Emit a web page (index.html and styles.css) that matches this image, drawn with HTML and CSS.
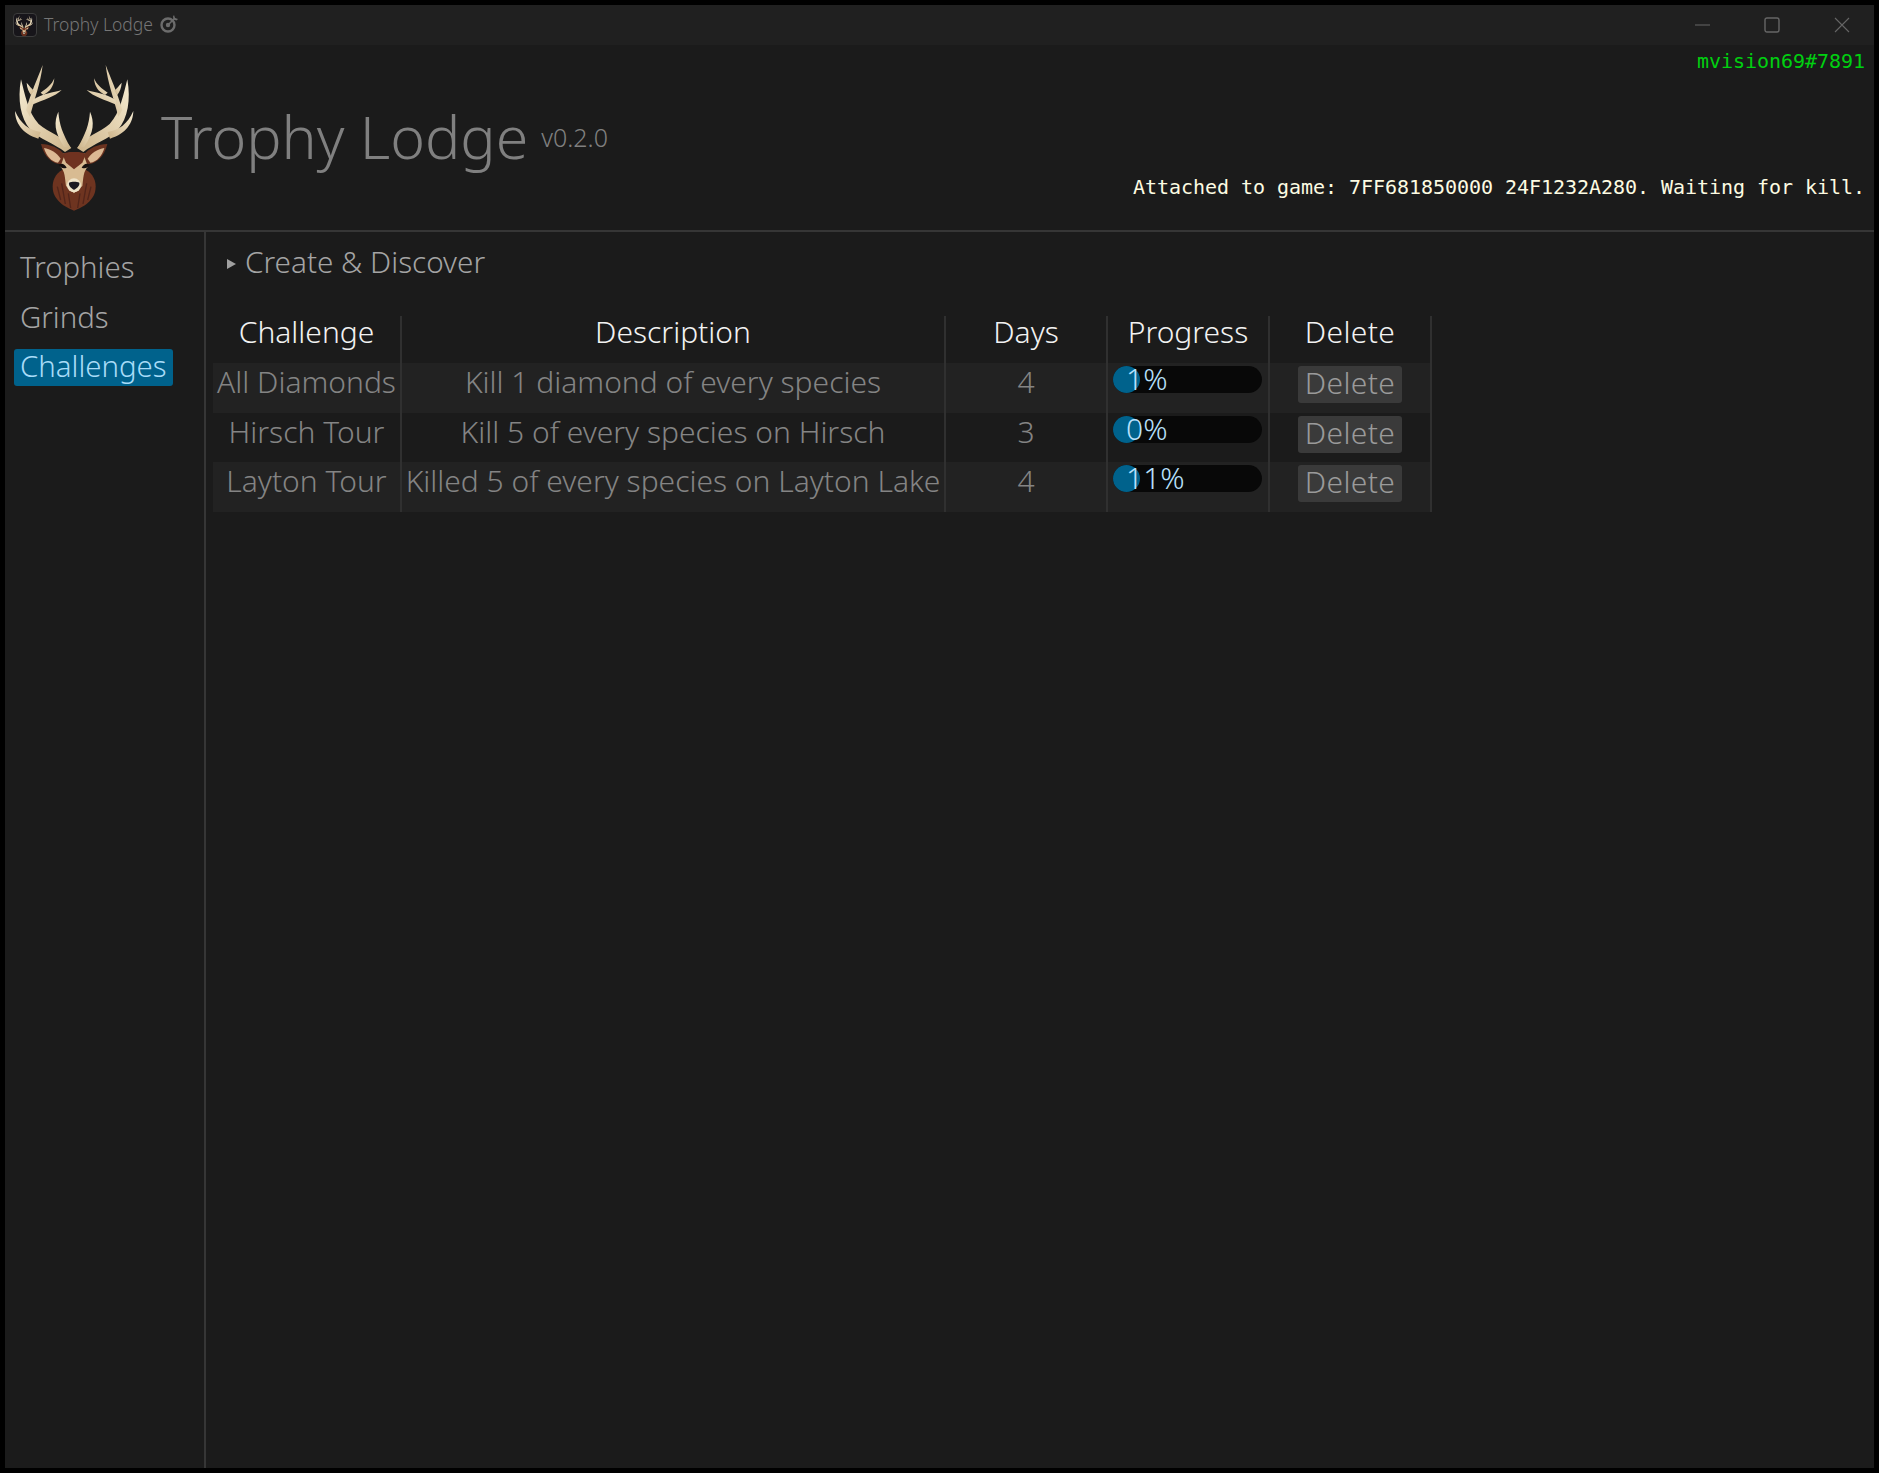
FILE: index.html
```html
<!DOCTYPE html>
<html lang="en">
<head>
    <meta charset="UTF-8">
    <title>Trophy Lodge</title>
    <link rel="stylesheet" href="styles.css">
</head>
<body>
    <svg class="defs" width="0" height="0">
        <defs>
            <linearGradient id="antler" x1="0" y1="0" x2="1" y2="1">
                <stop offset="0" stop-color="#f6ecd2"/>
                <stop offset="1" stop-color="#cdb48a"/>
            </linearGradient>
            <g id="antler-left" fill="url(#antler)">
                <path d="M195 306C165 282 118 268 90 238C62 205 52 150 63 88C74 130 84 188 116 222C145 248 190 258 214 294Z"/>
                <path d="M45 183C46 218 65 250 115 266L122 246C88 240 62 222 45 183Z"/>
                <path d="M175 185C162 215 162 245 192 290L212 293C188 250 178 225 175 185Z"/>
                <path d="M128 45C113 85 94 125 78 180L90 200C102 150 122 100 128 45Z"/>
                <path d="M185 120C160 128 128 130 98 150L96 164C130 150 165 140 185 120Z"/>
                <path d="M163 85C155 105 140 115 122 128L130 135C150 125 161 110 163 85Z"/>
                <path d="M80 98C81 115 86 125 93 135L102 122C95 115 88 108 80 98Z"/>
            </g>
            <g id="ear-left">
                <path d="M123 282C150 283 178 293 194 315L184 342C160 344 132 322 123 282Z" fill="#6b3320"/>
                <path d="M132 294C150 296 172 310 182 326L174 338C154 336 138 316 132 294Z" fill="#dcb994"/>
                <path d="M176 344C185 337 196 343 200 353C190 357 182 354 176 344Z" fill="#17110f"/>
            </g>
            <symbol id="deer" viewBox="15 0 450 510">
                <use href="#antler-left"/>
                <use href="#antler-left" transform="translate(445 0) scale(-1 1)"/>
                <path d="M222 482C198 472 158 452 158 410C158 375 185 352 222 352C260 352 287 375 287 410C287 452 247 472 222 482Z" fill="#6e3420"/>
                <path d="M185 400L196 462M205 430L212 474M240 430L233 474M260 400L249 462M172 410L182 450M273 410L263 450" stroke="#52251a" stroke-width="4" fill="none"/>
                <path d="M178 316C195 305 250 305 267 316L264 350C250 362 250 385 247 408L222 430L198 408C195 385 195 362 181 350Z" fill="#d8bb92"/>
                <path d="M187 312C200 304 245 304 258 312L247 338L222 358L198 338Z" fill="#6f3220"/>
                <use href="#ear-left"/>
                <use href="#ear-left" transform="translate(445 0) scale(-1 1)"/>
                <circle cx="222" cy="406" r="21" fill="#efe3c8"/>
                <path d="M207 398C215 394 230 394 238 398C240 408 228 417 222 419C216 417 205 408 207 398Z" fill="#1c1a22"/>
            </symbol>
        </defs>
    </svg>

    <div class="window">
        <div class="titlebar">
            <span class="app-icon">
                <svg width="22" height="25"><use href="#deer"/></svg>
            </span>
            <span class="app-name">Trophy Lodge</span>
            <svg class="target" width="20" height="20" viewBox="0 0 20 20">
                <circle cx="9" cy="11" r="6.5" fill="none" stroke="#6c6c6c" stroke-width="2.4"/>
                <circle cx="9" cy="11" r="2.2" fill="#6c6c6c"/>
                <path d="M9 11L16 4" stroke="#6c6c6c" stroke-width="1.6"/>
                <path d="M14 2.5L15 1L16 4L19 5L17.5 6.5L14.5 5.5Z" fill="#6c6c6c"/>
            </svg>
            <div class="window-controls">
                <svg width="16" height="16" viewBox="0 0 16 16"><path d="M1 8H16" stroke="#666"/></svg>
                <svg width="16" height="16" viewBox="0 0 16 16"><rect x="1" y="1" width="14" height="14" rx="2" fill="none" stroke="#666" stroke-width="1.4"/></svg>
                <svg width="16" height="16" viewBox="0 0 16 16"><path d="M1 1L15 15M15 1L1 15" stroke="#666" stroke-width="1.1"/></svg>
            </div>
        </div>

        <header class="header">
            <svg class="logo" width="150" height="170"><use href="#deer"/></svg>
            <h1 class="title">Trophy Lodge</h1>
            <span class="version">v0.2.0</span>
            <div class="status">
                <div class="user">mvision69#7891</div>
                <div class="attached">Attached to game: 7FF681850000 24F1232A280. Waiting for kill.</div>
            </div>
        </header>

        <div class="content">
            <nav class="sidebar">
                <a class="nav-item">Trophies</a>
                <a class="nav-item">Grinds</a>
                <a class="nav-item active">Challenges</a>
            </nav>
            <main class="main">
                <div class="collapse"><span class="arrow"></span><span class="collapse-label">Create &amp; Discover</span></div>
                <table class="challenges">
                    <colgroup>
                        <col class="col-name"><col class="col-desc"><col class="col-num"><col class="col-num"><col class="col-num">
                    </colgroup>
                    <thead>
                        <tr><th>Challenge</th><th>Description</th><th>Days</th><th>Progress</th><th class="th-delete">Delete</th></tr>
                    </thead>
                    <tbody>
                        <tr class="odd">
                            <td>All Diamonds</td>
                            <td>Kill 1 diamond of every species</td>
                            <td>4</td>
                            <td><div class="bar"><span class="blob"></span><span class="pct">1%</span></div></td>
                            <td><button class="del">Delete</button></td>
                        </tr>
                        <tr>
                            <td>Hirsch Tour</td>
                            <td>Kill 5 of every species on Hirsch</td>
                            <td>3</td>
                            <td><div class="bar"><span class="blob"></span><span class="pct">0%</span></div></td>
                            <td><button class="del">Delete</button></td>
                        </tr>
                        <tr class="odd">
                            <td>Layton Tour</td>
                            <td>Killed 5 of every species on Layton Lake</td>
                            <td>4</td>
                            <td><div class="bar"><span class="blob"></span><span class="pct">11%</span></div></td>
                            <td><button class="del">Delete</button></td>
                        </tr>
                    </tbody>
                </table>
            </main>
        </div>
    </div>
</body>
</html>
```

FILE: styles.css
```css
html, body {
    margin: 0;
    background-color: #000;
}
body {
    font-family: "Noto Sans", sans-serif;
    font-weight: 300;
}
.defs {
    display: block;
    height: 0;
}
.window {
    width: 1869px;
    height: 1463px;
    margin: 5px;
    background-color: #1b1b1b;
    display: flex;
    flex-direction: column;
    overflow: hidden;
}

/* title bar */
.titlebar {
    height: 40px;
    background-color: #202020;
    display: flex;
    align-items: center;
    padding-left: 8px;
    flex: none;
}
.app-icon {
    width: 22px;
    height: 22px;
    border: 1px solid #3c3c3c;
    border-radius: 4px;
    background-color: #17151a;
    display: flex;
    align-items: center;
    justify-content: center;
    overflow: hidden;
}
.app-name {
    margin-left: 7px;
    padding-bottom: 2px;
    font-size: 17.5px;
    color: #767676;
}
.target {
    margin-left: 6px;
    margin-bottom: 2px;
}
.window-controls {
    margin-left: auto;
    margin-right: 24px;
    display: flex;
    gap: 54px;
}

/* header */
.header {
    display: flex;
    flex: none;
    box-sizing: border-box;
    height: 187px;
    border-bottom: 2px solid #363636;
}
.logo {
    margin-top: 5px;
    flex: none;
}
.title {
    margin: 51px 0 0 6px;
    font-size: 59px;
    line-height: 80px;
    font-weight: 300;
    color: #808080;
}
.version {
    margin: 76px 0 0 13px;
    font-size: 25px;
    line-height: 32px;
    color: #808080;
}
.status {
    margin-left: auto;
    padding: 3px 9px 0 0;
    text-align: right;
    font-family: "DejaVu Sans Mono", monospace;
    font-weight: 400;
    font-size: 20px;
    line-height: 26px;
    letter-spacing: -0.04px;
}
.user {
    color: #00d010;
}
.attached {
    margin-top: 100px;
    color: #fdfbe2;
}

/* sidebar */
.content {
    flex: 1;
    display: flex;
}
.sidebar {
    flex: none;
    width: 190px;
    border-right: 2px solid #363636;
    padding: 18px 0 0 9px;
    display: flex;
    flex-direction: column;
    align-items: flex-start;
    gap: 12.5px;
}
.nav-item {
    height: 37px;
    line-height: 35px;
    padding: 0 6px;
    border-radius: 3px;
    font-size: 29.4px;
    color: #a4a4a4;
}
.nav-item.active {
    background-color: #00628c;
    color: #a8dcf8;
}

/* main */
.main {
    flex: 1;
    padding: 13px 0 0 7px;
}
.collapse {
    height: 37px;
    padding-left: 14px;
    font-size: 29.7px;
    color: #a4a4a4;
    display: flex;
    align-items: center;
}
.collapse-label {
    line-height: 33px;
    margin-bottom: 4px;
}
.arrow {
    width: 0;
    height: 0;
    border-left: 9px solid #a0a0a0;
    border-top: 5px solid transparent;
    border-bottom: 5px solid transparent;
    margin-right: 9px;
}

/* table */
.challenges {
    margin-top: 34px;
    border-collapse: collapse;
    table-layout: fixed;
    width: 1219px;
    font-size: 30px;
}
.col-name { width: 188px; }
.col-desc { width: 544px; }
.col-num { width: 162px; }
.challenges th, .challenges td {
    border-right: 2px solid #303030;
    padding: 0;
    text-align: center;
    white-space: nowrap;
    vertical-align: top;
}
.challenges th {
    height: 47px;
    line-height: 31px;
    font-weight: 300;
    color: #f2f2f2;
}
.challenges .th-delete {
    letter-spacing: 0.4px;
}
.challenges td {
    height: 49.5px;
    line-height: 38px;
    color: #848484;
}
.challenges tr.odd td {
    background-color: #222;
}
.bar {
    position: relative;
    height: 27px;
    margin: 3px 6px 0 5px;
    border-radius: 14px;
    background-color: #080808;
    text-align: left;
}
.blob {
    position: absolute;
    left: 0;
    top: 0;
    width: 27px;
    height: 27px;
    border-radius: 50%;
    background-color: #00628c;
}
.pct {
    position: absolute;
    left: 13px;
    top: -1px;
    line-height: 27px;
    color: #b8e0fc;
}
.del {
    display: block;
    box-sizing: border-box;
    width: 104px;
    height: 37px;
    margin: 3px auto 0;
    padding: 0 0 4px;
    border: none;
    border-radius: 3px;
    background-color: #3a3a3a;
    color: #9a9a9a;
    font-family: inherit;
    font-weight: 300;
    font-size: 30px;
    letter-spacing: 0.4px;
    line-height: 33px;
}
```
